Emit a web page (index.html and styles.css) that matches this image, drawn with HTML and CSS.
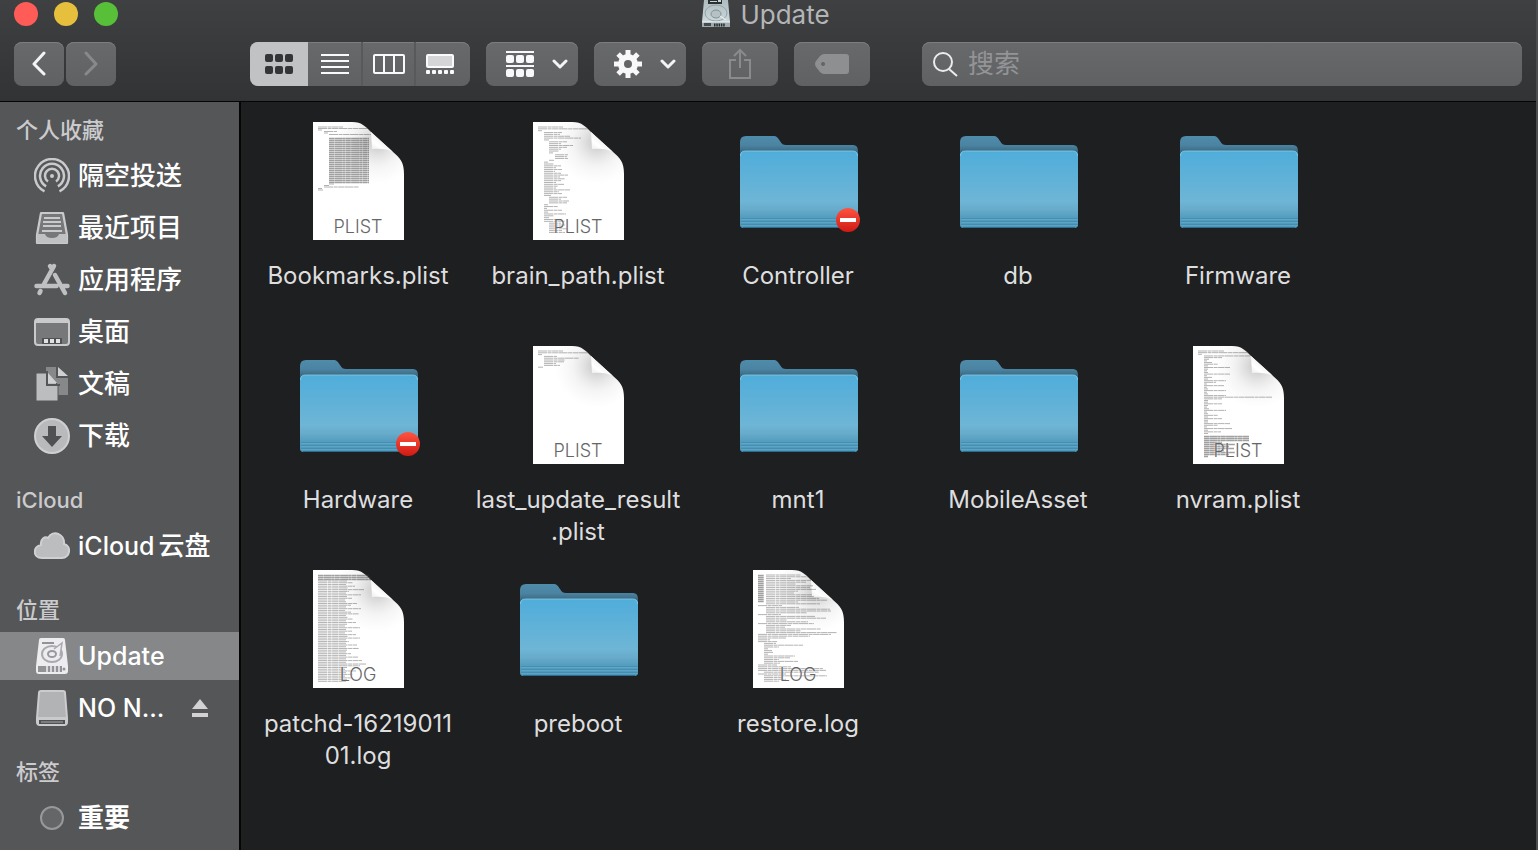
FILE: index.html
```html
<!DOCTYPE html>
<html lang="zh-CN">
<head>
<meta charset="utf-8">
<title>Update</title>
<link rel="stylesheet" href="styles.css">
</head>
<body>
<svg class="defs" width="0" height="0" aria-hidden="true">
  <defs>
    <linearGradient id="front" x1="0" y1="0" x2="0" y2="1">
      <stop offset="0" stop-color="#4fadda"/><stop offset=".65" stop-color="#6eb5d6"/><stop offset=".76" stop-color="#68abcb"/><stop offset=".86" stop-color="#559dbf"/><stop offset="1" stop-color="#4b98bc"/>
    </linearGradient>
    <linearGradient id="back" x1="0" y1="0" x2="0" y2="1">
      <stop offset="0" stop-color="#4f8bab"/><stop offset=".1" stop-color="#4b84a2"/><stop offset=".17" stop-color="#3c6980"/>
    </linearGradient>
    <linearGradient id="red" x1="0" y1="0" x2="0" y2="1">
      <stop offset="0" stop-color="#ff5440"/><stop offset="1" stop-color="#cf1a14"/>
    </linearGradient>
    <radialGradient id="curl" gradientUnits="userSpaceOnUse" cx="64" cy="20" r="42">
      <stop offset="0" stop-color="#888" stop-opacity=".5"/><stop offset=".3" stop-color="#999" stop-opacity=".3"/><stop offset=".6" stop-color="#bbb" stop-opacity=".15"/><stop offset="1" stop-color="#ccc" stop-opacity="0"/>
    </radialGradient>
    <linearGradient id="fold" x1="0" y1="1" x2=".6" y2=".3">
      <stop offset="0" stop-color="#e8e8e8"/><stop offset=".5" stop-color="#fff"/><stop offset="1" stop-color="#ededed"/>
    </linearGradient>
    <linearGradient id="metal" x1="0" y1="0" x2="0" y2="1">
      <stop offset="0" stop-color="#aebcc0"/><stop offset="1" stop-color="#d3dfe1"/>
    </linearGradient>
    <symbol id="folder" viewBox="0 0 128 128">
      <path d="M6 108V25q0-6 6-6h27c4 0 5 2 7 5 2 3 3 4 6 4h67q5 0 5 6v74q0 3-4 3H10q-4 0-4-3z" fill="url(#back)"/>
      <path d="M6 107V39q0-5 5-5h108q5 0 5 5v68q0 4-4 4H10q-4 0-4-4z" fill="url(#front)"/>
      <path d="M6.500 39q0-5 5-5h107q5 0 5 5" fill="none" stroke="#8ccbe8" opacity=".8"/>
      <path d="M7 101.500h117M7 104.500h117M7 107.500h117" stroke="#3c83a5" opacity=".5"/>
      <path d="M7 102.500h117M7 105.500h117M7 108.500h117" stroke="#74b6d2" opacity=".4"/>
      <path d="M9 110.500h112" stroke="#2f6c89"/>
    </symbol>
    <symbol id="page" viewBox="0 0 91 118">
      <path d="M0 0H39C49 0 53 5 58 10L80 30C87 36 91 40 91 52V118H0Z" fill="#fff"/>
      <path d="M0 0H39C49 0 53 5 58 10L80 30C87 36 91 40 91 52V118H0Z" fill="url(#curl)"/>
      <path d="M58 10L59 27C68 26 75 27 80 30Z" fill="url(#fold)"/>
    </symbol>
    <symbol id="denied" viewBox="0 0 24 24">
      <circle cx="12" cy="12" r="12" fill="url(#red)"/><path d="M4 10h16v4H4z" fill="#fff"/>
    </symbol>
    <symbol id="chevron" viewBox="0 0 16 10"><path d="M2 2l6 6 6-6" fill="none" stroke="#f4f4f6" stroke-width="3" stroke-linecap="round" stroke-linejoin="round"/></symbol>
  </defs>
</svg>

<div class="window">
  <header class="toolbar">
    <div class="titlebar">
      <div class="lights">
        <button class="light close" aria-label="关闭"></button>
        <button class="light minimize" aria-label="最小化"></button>
        <button class="light maximize" aria-label="缩放"></button>
      </div>
      <h1 class="title">
        <svg width="28" height="28" viewBox="0 0 28 28" aria-hidden="true">
          <path d="M2 0H26L28 22V27H0V22Z" fill="url(#metal)"/>
          <path d="M6 0h14v4H6z" fill="#2b3033"/><path d="M8 1h7v1h-7zM16 0h3v2h-3z" fill="#c9d2d4"/>
          <ellipse cx="14" cy="13" rx="11" ry="8" fill="none" stroke="#93a3a8"/><ellipse cx="14" cy="14" rx="5" ry="4" fill="#b5c1c5" stroke="#829196"/>
          <path d="M18 16l6 4" stroke="#eef4f5"/>
          <path d="M0 22h28v5H0z" fill="#9eabae"/><path d="M0 22h28" stroke="#edf3f4"/>
          <path d="M2 23h7v3H2z" fill="#454c4f"/><path d="M12 25h11" stroke="#252a2c" stroke-width="3" stroke-dasharray="1.5 .8"/>
        </svg>
        <span>Update</span>
      </h1>
    </div>
    <div class="tools">
      <div class="nav">
        <button class="tool step" aria-label="后退"><svg width="16" height="26" viewBox="0 0 16 26"><path d="M13 2L3 13l10 10" class="line-strong"/></svg></button>
        <button class="tool step" aria-label="前进" disabled><svg width="16" height="26" viewBox="0 0 16 26"><path d="M3 2l10 11L3 23" class="line-dim"/></svg></button>
      </div>
      <div class="views">
        <button class="view selected" aria-label="图标"><svg width="28" height="20" viewBox="0 0 28 20" fill="#343537"><rect width="8" height="8" rx="2"/><rect x="10" width="8" height="8" rx="2"/><rect x="20" width="8" height="8" rx="2"/><rect y="12" width="8" height="8" rx="2"/><rect x="10" y="12" width="8" height="8" rx="2"/><rect x="20" y="12" width="8" height="8" rx="2"/></svg></button>
        <button class="view" aria-label="列表"><svg width="28" height="20" viewBox="0 0 28 20"><path d="M0 1h28M0 7h28M0 13h28M0 19h28" stroke="#fafafc" stroke-width="2"/></svg></button>
        <button class="view" aria-label="分栏"><svg width="32" height="20" viewBox="0 0 32 20"><rect x="1" y="1" width="30" height="18" rx="1" fill="none" stroke="#fafafc" stroke-width="2"/><path d="M11 1v18M21 1v18" stroke="#fafafc" stroke-width="2"/></svg></button>
        <button class="view gallery" aria-label="画廊"><svg width="28" height="20" viewBox="0 0 28 20"><rect x="1" y="1" width="26" height="12" rx="1" fill="#d5d5d8" stroke="#fafafc" stroke-width="2"/><g fill="#fafafc"><rect y="16" width="4" height="4" rx="1"/><rect x="6" y="16" width="4" height="4" rx="1"/><rect x="12" y="16" width="4" height="4" rx="1"/><rect x="18" y="16" width="4" height="4" rx="1"/><rect x="24" y="16" width="4" height="4" rx="1"/></g></svg></button>
      </div>
      <button class="tool menu" aria-label="排列">
        <svg width="28" height="26" viewBox="0 0 28 26" fill="#f8f8fa"><path d="M0 0h28v2H0zM0 14h28v2H0z"/><rect y="4" width="8" height="8" rx="2"/><rect x="10" y="4" width="8" height="8" rx="2"/><rect x="20" y="4" width="8" height="8" rx="2"/><rect y="18" width="8" height="8" rx="2"/><rect x="10" y="18" width="8" height="8" rx="2"/><rect x="20" y="18" width="8" height="8" rx="2"/></svg>
        <svg width="16" height="10"><use href="#chevron"/></svg>
      </button>
      <button class="tool menu" aria-label="操作">
        <svg width="28" height="28" viewBox="-14 -14 28 28"><circle r="7" fill="none" stroke="#f8f8fa" stroke-width="6"/><g stroke="#f8f8fa" stroke-width="5"><path id="teeth" d="M0-14v6M0 8v6M-14 0h6M8 0h6"/><use href="#teeth" transform="rotate(45)"/></g></svg>
        <svg width="16" height="10"><use href="#chevron"/></svg>
      </button>
      <button class="tool wide" aria-label="共享" disabled><svg width="24" height="32" viewBox="0 0 24 32"><path d="M8 12H2v18h20V12h-6M12 20V2M6 8l6-6 6 6" fill="none" stroke="#8a8b8d" stroke-width="2"/></svg></button>
      <button class="tool wide" aria-label="标签" disabled><svg width="34" height="20" viewBox="0 0 34 20"><path fill-rule="evenodd" d="M9 0H31q3 0 3 3V17q0 3-3 3H9Q7 20 5 18L1 13Q-1 10 1 7L5 2Q7 0 9 0ZM8 8a2 2 0 1 0 .1 0Z" fill="#8e8f91"/></svg></button>
      <label class="search">
        <svg width="26" height="26" viewBox="0 0 26 26" fill="none" stroke="#ececee" stroke-width="2"><circle cx="11" cy="11" r="9"/><path d="M17 18l8 7"/></svg>
        <input type="search" placeholder="搜索" aria-label="搜索">
      </label>
    </div>
  </header>

  <div class="body">
    <nav class="sidebar">
      <h2>个人收藏</h2>
      <a href="#"><svg width="36" height="36" viewBox="0 0 36 36" fill="none" stroke="#c9cacc" stroke-width="2.5"><path d="M10.500 33.300A17 17 0 1 1 25.500 33.300M12.100 28.300A12 12 0 1 1 23.900 28.300M14 23.500A7 7 0 1 1 22 23.500"/><circle cx="18" cy="18" r="2" fill="#c9cacc" stroke="none"/></svg>隔空投送</a>
      <a href="#"><svg width="36" height="36" viewBox="0 0 36 36"><path d="M7 3H29L33 25V33H3V25Z" fill="#77787a" stroke="#c9cacc" stroke-width="2.200" stroke-linejoin="round"/><path d="M3 24h8q1 4 7 4t7-4h8v9H3z" fill="#c0c1c3"/><path d="M10 8h16M9 12h18M9 16h18M8 21h20" stroke="#c9cacc" stroke-width="2"/></svg>最近项目</a>
      <a href="#"><svg width="36" height="36" viewBox="0 0 36 36" fill="none" stroke="#bfc0c2" stroke-width="4.500" stroke-linecap="round"><path d="M20 4L10 22M16 4l2 3M21 13l10 18M2.500 24h20M29 24h4.500M5.500 31l1-2"/></svg>应用程序</a>
      <a href="#"><svg width="36" height="36" viewBox="0 0 36 36"><rect x="1" y="5" width="34" height="26" rx="3" fill="#77787a" stroke="#c9cacc" stroke-width="2"/><path d="M1 9V7q0-2 2-2h30q2 0 2 2v2z" fill="#c9cacc"/><path d="M8 24h20v6H8z" fill="#505153"/><path d="M10 25h4v4h-4zM16 25h4v4h-4zM22 25h4v4h-4z" fill="#e0e0e2"/></svg>桌面</a>
      <a href="#"><svg width="36" height="36" viewBox="0 0 36 36"><path d="M12 1h10v11h12v17H12z" fill="#87888a"/><path d="M24 1v9h10z" fill="#d0d1d3"/><path d="M2 7h10l12 12v16H2z" fill="#bcbdbf" stroke="#555658" stroke-width="1"/><path d="M13 5v14h13" fill="none" stroke="#555658" stroke-width="2"/><path d="M14 7v10h9z" fill="#d0d1d3"/></svg>文稿</a>
      <a href="#"><svg width="36" height="36" viewBox="0 0 36 36"><circle cx="18" cy="18" r="17" fill="#b9babc" stroke="#cfd0d2" stroke-width="2"/><path d="M14 8h8v10h6L18 29 8 18h6z" fill="#505153"/></svg>下载</a>

      <h2>iCloud</h2>
      <a href="#"><svg width="36" height="36" viewBox="0 0 36 36"><path d="M8 30C-2 30-1 18 7 17C6 11 11 8 14 10C19 1 31 6 30 16C38 18 36 30 28 30Z" fill="#bcbdbf" stroke="#cfd0d2" stroke-width="2"/></svg><span><span class="latin">iCloud</span><span class="drive">云盘</span></span></a>

      <h2>位置</h2>
      <a href="#" class="current latin"><svg width="36" height="36" viewBox="0 0 36 36"><path d="M7 0H29Q31 0 31 2L34 28V33Q34 36 31 36H5Q2 36 2 33V28L5 2Q5 0 7 0Z" fill="#ededf0"/><ellipse cx="18" cy="16" rx="10" ry="8" fill="none" stroke="#aaaaae" stroke-width="2"/><path d="M20 11l8-6-2 13" fill="#ededf0" stroke="#aaaaae" stroke-width="1.500"/><ellipse cx="18" cy="16" rx="4" ry="3" fill="none" stroke="#98999c" stroke-width="2"/><path d="M8 5h12" stroke="#929396" stroke-width="2"/><path d="M4 28h24v6H4z" fill="#929396"/><path d="M12 31h15" stroke="#d8d8da" stroke-width="6" stroke-dasharray="2 2"/><circle cx="30" cy="31" r="1.500" fill="#929396"/></svg>Update</a>
      <div class="volume">
        <a href="#" class="latin"><svg width="36" height="36" viewBox="0 0 36 36"><path d="M7 1H29Q31 1 31 3L33 28V32Q33 35 30 35H6Q3 35 3 32V28L5 3Q5 1 7 1Z" fill="#b2b3b5" stroke="#ccccce" stroke-width="2"/><path d="M3 27h30v6q0 2-3 2H6q-3 0-3-2z" fill="#c9cacc"/><path d="M5 32h26" stroke="#505153" stroke-width="4"/><path d="M7 32h22" stroke="#aaabad"/></svg>NO N...</a>
        <button class="eject" aria-label="推出"><svg width="16" height="18" viewBox="0 0 16 18" fill="#d2d2d4"><path d="M8 0l8 10H0zM0 14h16v4H0z"/></svg></button>
      </div>

      <h2>标签</h2>
      <a href="#"><svg width="36" height="36" viewBox="0 0 36 36"><circle cx="18" cy="18" r="11" fill="#656668" stroke="#98999b" stroke-width="2"/></svg><b>重要</b></a>
    </nav>

    <main class="files">
      <figure class="file">
        <div class="doc"><svg class="paper"><use href="#page"/></svg>
          <svg class="ink" viewBox="0 0 91 118"><path data-top="5" data-pitch="1.5" data-rows="5:25 5:50 5:4 11:13 11:4 16:42"/><path class="dense" data-top="16" data-pitch="2" data-rows="16:40 16:40 16:40 16:40 16:40 16:40 16:40 16:40 16:40 16:40 16:40 16:40 16:40 16:40 16:40 16:40 16:40 16:40 16:40 16:40 16:40 16:40 16:40"/><path data-top="62" data-pitch="1.5" data-rows="16:5 11:5 11:35 5:4 5:5"/></svg><span>PLIST</span></div>
        <figcaption>Bookmarks.plist</figcaption>
      </figure>
      <figure class="file">
        <div class="doc"><svg class="paper"><use href="#page"/></svg>
          <svg class="ink" viewBox="0 0 91 118"><path data-top="5" data-pitch="1.85" data-rows="5:25 5:50 5:4 11:18 11:16 11:26 11:37 11:5 16:18 16:12 16:24 16:18 16:12 16:10 16:4 22:13 22:12 22:13 16:5 11:4 11:10 11:17 11:12 11:18 11:11 11:17 11:24 11:16 11:21 11:17 11:12 11:20 11:14 11:12 11:26 11:15 11:18 11:7 16:18 16:12 16:20 16:18 11:4 11:14 11:3 11:18 11:4 11:22 11:10 11:5 11:18 11:21 16:12 16:16 16:14 16:18 16:13 16:16"/></svg><span>PLIST</span></div>
        <figcaption>brain_path.plist</figcaption>
      </figure>
      <figure class="file">
        <div class="folder"><svg width="128" height="128"><use href="#folder"/></svg><svg class="badge"><use href="#denied"/></svg></div>
        <figcaption>Controller</figcaption>
      </figure>
      <figure class="file">
        <div class="folder"><svg width="128" height="128"><use href="#folder"/></svg></div>
        <figcaption>db</figcaption>
      </figure>
      <figure class="file">
        <div class="folder"><svg width="128" height="128"><use href="#folder"/></svg></div>
        <figcaption>Firmware</figcaption>
      </figure>

      <figure class="file">
        <div class="folder"><svg width="128" height="128"><use href="#folder"/></svg><svg class="badge"><use href="#denied"/></svg></div>
        <figcaption>Hardware</figcaption>
      </figure>
      <figure class="file">
        <div class="doc"><svg class="paper"><use href="#page"/></svg>
          <svg class="ink" viewBox="0 0 91 118"><path data-top="5" data-pitch="1.8" data-rows="5:25 5:50 5:4 11:13 11:35 11:21 11:20 11:12 11:16 5:5"/></svg><span>PLIST</span></div>
        <figcaption>last_update_result<br>.plist</figcaption>
      </figure>
      <figure class="file">
        <div class="folder"><svg width="128" height="128"><use href="#folder"/></svg></div>
        <figcaption>mnt1</figcaption>
      </figure>
      <figure class="file">
        <div class="folder"><svg width="128" height="128"><use href="#folder"/></svg></div>
        <figcaption>MobileAsset</figcaption>
      </figure>
      <figure class="file">
        <div class="doc"><svg class="paper"><use href="#page"/></svg>
          <svg class="ink" viewBox="0 0 91 118"><path data-top="5" data-pitch="1.65" data-rows="5:26 5:50 5:4 11:46 11:18 11:5 11:3 11:8 11:14 11:4 11:26 11:4 11:3 11:4 11:26 11:3 11:8 11:4 11:22 11:12 11:3 11:20 11:3 11:4 11:22 11:3 11:4 11:22 11:68 11:18 11:4 11:4 11:18 11:4 11:3 11:5 11:22 11:3 11:4 11:14 11:4 11:18 11:4 11:4 11:26 11:14 11:3 11:28 11:4 11:17 11:4"/><path class="dense" data-top="90" data-pitch="2" data-rows="11:45 11:45 11:45 11:18 11:31 11:25 11:30 11:20 11:31 11:25 11:4"/></svg><span>PLIST</span></div>
        <figcaption>nvram.plist</figcaption>
      </figure>

      <figure class="file">
        <div class="doc"><svg class="paper"><use href="#page"/></svg>
          <svg class="ink" viewBox="0 0 91 118"><path class="dense" data-top="5" data-pitch="2" data-rows="5:51 5:52 5:53"/><path data-top="11" data-pitch="1.73" data-rows="5:29 5:35 5:28 5:37 5:30 5:46 5:31 5:28 5:43 5:29 5:34 5:27 5:28 5:39 5:33 5:28 5:43 5:27 5:33 5:41 5:28 5:30 5:35 5:28 5:38 5:29 5:27 5:42 5:28 5:34 5:27 5:38 5:30 5:42 5:28 5:31 5:28 5:39 5:28 5:41 5:29 5:28 5:33 5:28 5:40 5:28 5:44 5:28 5:48 5:42 5:29 5:27 5:38 5:28 5:35 5:27 5:34 5:29 5:28"/></svg><span>LOG</span></div>
        <figcaption>patchd-16219011<br>01.log</figcaption>
      </figure>
      <figure class="file">
        <div class="folder"><svg width="128" height="128"><use href="#folder"/></svg></div>
        <figcaption>preboot</figcaption>
      </figure>
      <figure class="file">
        <div class="doc"><svg class="paper"><use href="#page"/></svg>
          <svg class="ink" viewBox="0 0 91 118"><path class="dense" data-top="5" data-pitch="2" data-rows="5:6 5:6 5:6 5:6 5:6 5:6 5:6 5:6 5:6 5:6 5:6 5:6 5:6 5:6"/><path data-top="5" data-pitch="1.8" data-rows="13:35 13:42 13:25 13:45 13:40 13:30 13:47 13:44 13:50 13:32 13:28 13:46 13:48 13:53 13:61 13:32 13:54 5:24 13:33 13:64 13:65 13:41 5:23 13:49 13:60 13:21 13:42 5:56 13:25 13:19 13:55 13:35 13:71 5:73 5:52 5:28 5:12 5:19 11:12 11:39 11:15 11:4 11:8 11:9 11:4 11:31 11:26 11:15 11:34 11:16 5:19 5:33 5:65 5:68 11:55 5:28 11:63 11:18 11:22 11:15"/></svg><span>LOG</span></div>
        <figcaption>restore.log</figcaption>
      </figure>
    </main>
  </div>
</div>
<script src="preview.js"></script>
</body>
</html>
```
FILE: styles.css
```css
* { box-sizing: border-box; }

body {
  margin: 0;
  background: #1e1f21;
  font-family: Inter, "Noto Sans CJK SC", sans-serif;
}

button { border: 0; padding: 0; font: inherit; }
svg { display: block; flex: none; }
.defs { position: absolute; }

.window {
  display: flex;
  flex-direction: column;
  height: 100vh;
  overflow: hidden;
  border-right: 2px solid #4c4d4f;
}

.toolbar {
  flex: none;
  padding-bottom: 15px;
  border-bottom: 1px solid #050505;
  background: linear-gradient(#3f4042, #323335);
}

.titlebar {
  display: grid;
  grid-template-columns: 1fr auto 1fr;
  align-items: center;
  height: 28px;
}
.lights { display: flex; gap: 16px; padding-left: 14px; }
.light { width: 24px; height: 24px; border-radius: 50%; }
.close { background: #ff5c58; }
.minimize { background: #e6bf3d; }
.maximize { background: #58c038; }

.title {
  display: flex;
  align-items: flex-start;
  gap: 10px;
  height: 28px;
  margin: 0;
  padding-right: 4px;
  color: #b4b5b7;
  font-size: 26px;
  font-weight: 400;
  line-height: 30px;
}

.tools {
  display: flex;
  gap: 16px;
  margin-top: 14px;
  padding: 0 14px;
}

.tool, .views, .search {
  height: 44px;
  border-radius: 8px;
  background: linear-gradient(#68696b, #606163);
  box-shadow: inset 0 1px #7c7d7f;
}
.tool {
  display: flex;
  align-items: center;
  justify-content: center;
}
.nav { display: flex; gap: 2px; margin-right: 118px; }
.step { width: 50px; }
.menu { gap: 18px; width: 92px; padding-left: 10px; }
.wide { width: 76px; }
.line-strong, .line-dim {
  fill: none;
  stroke: #f4f4f6;
  stroke-width: 3;
  stroke-linecap: round;
  stroke-linejoin: round;
}
.line-dim { stroke: #88898b; }

.views { display: flex; width: 220px; overflow: hidden; }
.view {
  display: flex;
  align-items: center;
  justify-content: center;
  width: 53px;
  background: transparent;
}
.view + .view + .view { border-left: 2px solid #58595b; }
.view.selected { width: 58px; background: #c1c2c4; }
.view.gallery { flex: 1; padding-right: 6px; }

.search {
  display: flex;
  flex: 1;
  align-items: center;
  gap: 10px;
  margin-left: 36px;
  padding: 0 10px;
}
.search input {
  flex: 1;
  min-width: 0;
  padding: 0;
  border: 0;
  outline: 0;
  background: transparent;
  color: #fff;
  font: inherit;
  font-size: 26px;
  line-height: 40px;
}
.search input::placeholder { color: #939496; opacity: 1; }

.body { display: flex; flex: 1; min-height: 0; }

.sidebar {
  display: flex;
  flex: none;
  flex-direction: column;
  width: 241px;
  padding-top: 8px;
  overflow: hidden;
  border-right: 2px solid #050505;
  background: #555658;
}
.sidebar h2 {
  margin: 18px 0 0 16px;
  color: #cbcbcd;
  font-size: 22px;
  font-weight: 500;
  line-height: 40px;
}
.sidebar h2:first-child { margin-top: 0; }
.sidebar a {
  display: flex;
  flex: none;
  align-items: center;
  gap: 8px;
  height: 48px;
  margin: 2px 0;
  padding-left: 34px;
  color: #fff;
  font-size: 26px;
  font-weight: 500;
  line-height: 38px;
  text-decoration: none;
}
.sidebar .latin { font-size: 25px; }
.drive { margin-left: 4px; }
.current { background: #868789; }
.volume {
  display: flex;
  align-items: center;
  justify-content: space-between;
  padding-right: 31px;
}
.eject { background: transparent; }

.files {
  display: grid;
  flex: 1;
  grid-template-columns: repeat(auto-fill, 220px);
  grid-auto-rows: 224px;
  align-content: start;
  padding: 15px 0 0 7px;
  overflow: hidden;
  background: #1e1f21;
}
.file {
  display: flex;
  flex-direction: column;
  align-items: center;
  margin: 0;
}
.folder { position: relative; width: 128px; height: 128px; }
.badge { position: absolute; right: 2px; bottom: 13px; width: 24px; height: 24px; }
.doc {
  position: relative;
  width: 91px;
  height: 118px;
  margin: 5px 0;
}
.paper, .ink { position: absolute; inset: 0; width: 91px; height: 118px; }
.ink {
  fill: none;
  stroke: #444;
  stroke-width: .8;
  stroke-dasharray: 9 .6 4 .5 6 .4;
  opacity: .5;
}
.ink .dense { stroke-width: 1.3; stroke-dasharray: 5 .3 8 .2 3 .3; }
.doc span {
  position: absolute;
  inset: auto 0 0;
  color: #666;
  font-size: 18px;
  font-weight: 300;
  line-height: 26px;
  text-align: center;
  text-shadow: 0 0 2px #fff;
}
.file figcaption {
  margin-top: 15px;
  color: #dededf;
  font-size: 24px;
  line-height: 32px;
  text-align: center;
  white-space: nowrap;
}
```
FILE: preview.js
```js
// Turns "indent:length" rows into the miniature text lines of a file preview.
document.querySelectorAll("path[data-rows]").forEach((path) => {
  const top = Number(path.dataset.top);
  const pitch = Number(path.dataset.pitch);
  const offset = path.classList.contains("dense") ? 0.5 : 0;
  path.setAttribute("d", path.dataset.rows.split(" ").map((row, i) => {
    const [indent, length] = row.split(":");
    return `M${indent} ${top + offset + i * pitch}h${length}`;
  }).join(""));
});
```
